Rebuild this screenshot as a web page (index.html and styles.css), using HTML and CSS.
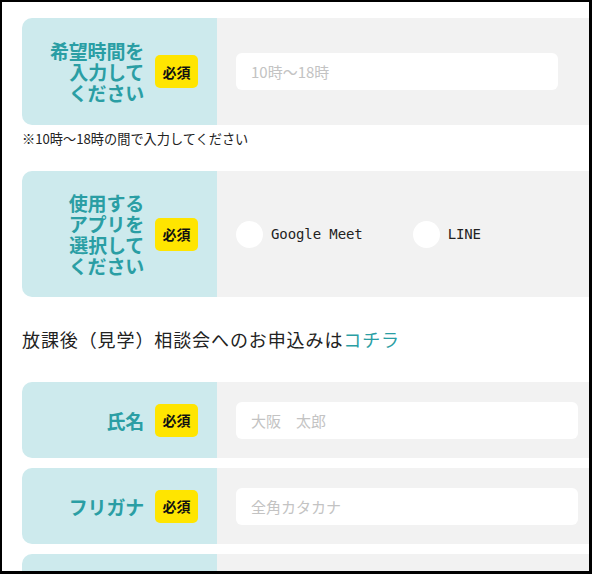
FILE: index.html
```html
<!DOCTYPE html>
<html lang="ja">
<head>
<meta charset="utf-8">
<link rel="stylesheet" href="styles.css">
</head>
<body>
<div class="frame">
  <div class="form">
    <div class="card card--time">
      <div class="label">
        <span class="label-text">希望時間を<br>入力して<br>ください</span>
        <span class="badge">必須</span>
      </div>
      <div class="field">
        <div class="input input--short">10時〜18時</div>
      </div>
    </div>
    <p class="note">※10時〜18時の間で入力してください</p>

    <div class="card card--app">
      <div class="label">
        <span class="label-text">使用する<br>アプリを<br>選択して<br>ください</span>
        <span class="badge">必須</span>
      </div>
      <div class="field">
        <div class="radios">
          <label class="radio"><span class="dot"></span><span class="radio-text">Google Meet</span></label>
          <label class="radio"><span class="dot"></span><span class="radio-text">LINE</span></label>
        </div>
      </div>
    </div>

    <p class="lead">放課後（見学）相談会へのお申込みは<span class="link">コチラ</span></p>

    <div class="card card--single">
      <div class="label">
        <span class="label-text">氏名</span>
        <span class="badge">必須</span>
      </div>
      <div class="field">
        <div class="input">大阪　太郎</div>
      </div>
    </div>

    <div class="card card--single">
      <div class="label">
        <span class="label-text">フリガナ</span>
        <span class="badge">必須</span>
      </div>
      <div class="field">
        <div class="input">全角カタカナ</div>
      </div>
    </div>

    <div class="card card--single">
      <div class="label"></div>
      <div class="field"></div>
    </div>
  </div>
</div>
</body>
</html>
```

FILE: styles.css
```css
* {
  box-sizing: border-box;
}

html, body {
  margin: 0;
  padding: 0;
  background: #000;
}

body {
  font-family: "Noto Sans CJK JP", "Noto Sans", sans-serif;
  color: #222;
}

.frame {
  width: 592px;
  height: 574px;
  overflow: hidden;
  background: #fff;
  border-style: solid;
  border-color: #000;
  border-width: 2px 3px 3px 2px;
}

.form {
  width: 620px;
  padding: 16px 0 0 20px;
}

.card {
  display: grid;
  grid-template-columns: 195px 1fr;
  border-radius: 10px 0 0 10px;
  overflow: hidden;
}

.card + .card {
  margin-top: 10px;
}

.label {
  background: #cdeaed;
  display: flex;
  justify-content: flex-end;
  align-items: center;
  gap: 11px;
  padding: 0 19px 0 10px;
}

.label-text {
  color: #2a9ea4;
  font-weight: 700;
  font-size: 19px;
  line-height: 21px;
  text-align: right;
  letter-spacing: -0.2px;
}

.badge {
  background: #ffe500;
  color: #111;
  font-weight: 700;
  font-size: 14px;
  line-height: 1;
  width: 43px;
  height: 33px;
  border-radius: 5px;
  display: flex;
  align-items: center;
  justify-content: center;
  flex-shrink: 0;
}

.field {
  background: #f2f2f2;
  display: flex;
  align-items: center;
  padding-left: 19px;
}

.input {
  background: #fff;
  border-radius: 6px;
  width: 342px;
  height: 37px;
  display: flex;
  align-items: center;
  padding-left: 15px;
  font-size: 15px;
  color: #c3c3c3;
}

.input--short {
  width: 322px;
}

.card--single {
  height: 76px;
}

.card--time {
  height: 107px;
}

.note {
  margin: 5px 0 0;
  font-size: 13.2px;
  line-height: 18px;
  color: #222;
}

.card--app {
  margin-top: 23px;
  height: 126px;
}

.radios {
  display: flex;
  align-items: center;
  gap: 50px;
}

.radio {
  display: flex;
  align-items: center;
  gap: 8px;
}

.dot {
  width: 27px;
  height: 27px;
  border-radius: 50%;
  background: #fff;
  flex-shrink: 0;
}

.radio-text {
  font-family: "DejaVu Sans Mono", "Liberation Mono", monospace;
  font-size: 14px;
  color: #222;
  letter-spacing: -0.1px;
}

.lead {
  margin: 29px 0 30px;
  font-size: 18px;
  line-height: 26px;
  letter-spacing: 0.9px;
  color: #222;
}

.link {
  color: #2a9ea4;
}
```
